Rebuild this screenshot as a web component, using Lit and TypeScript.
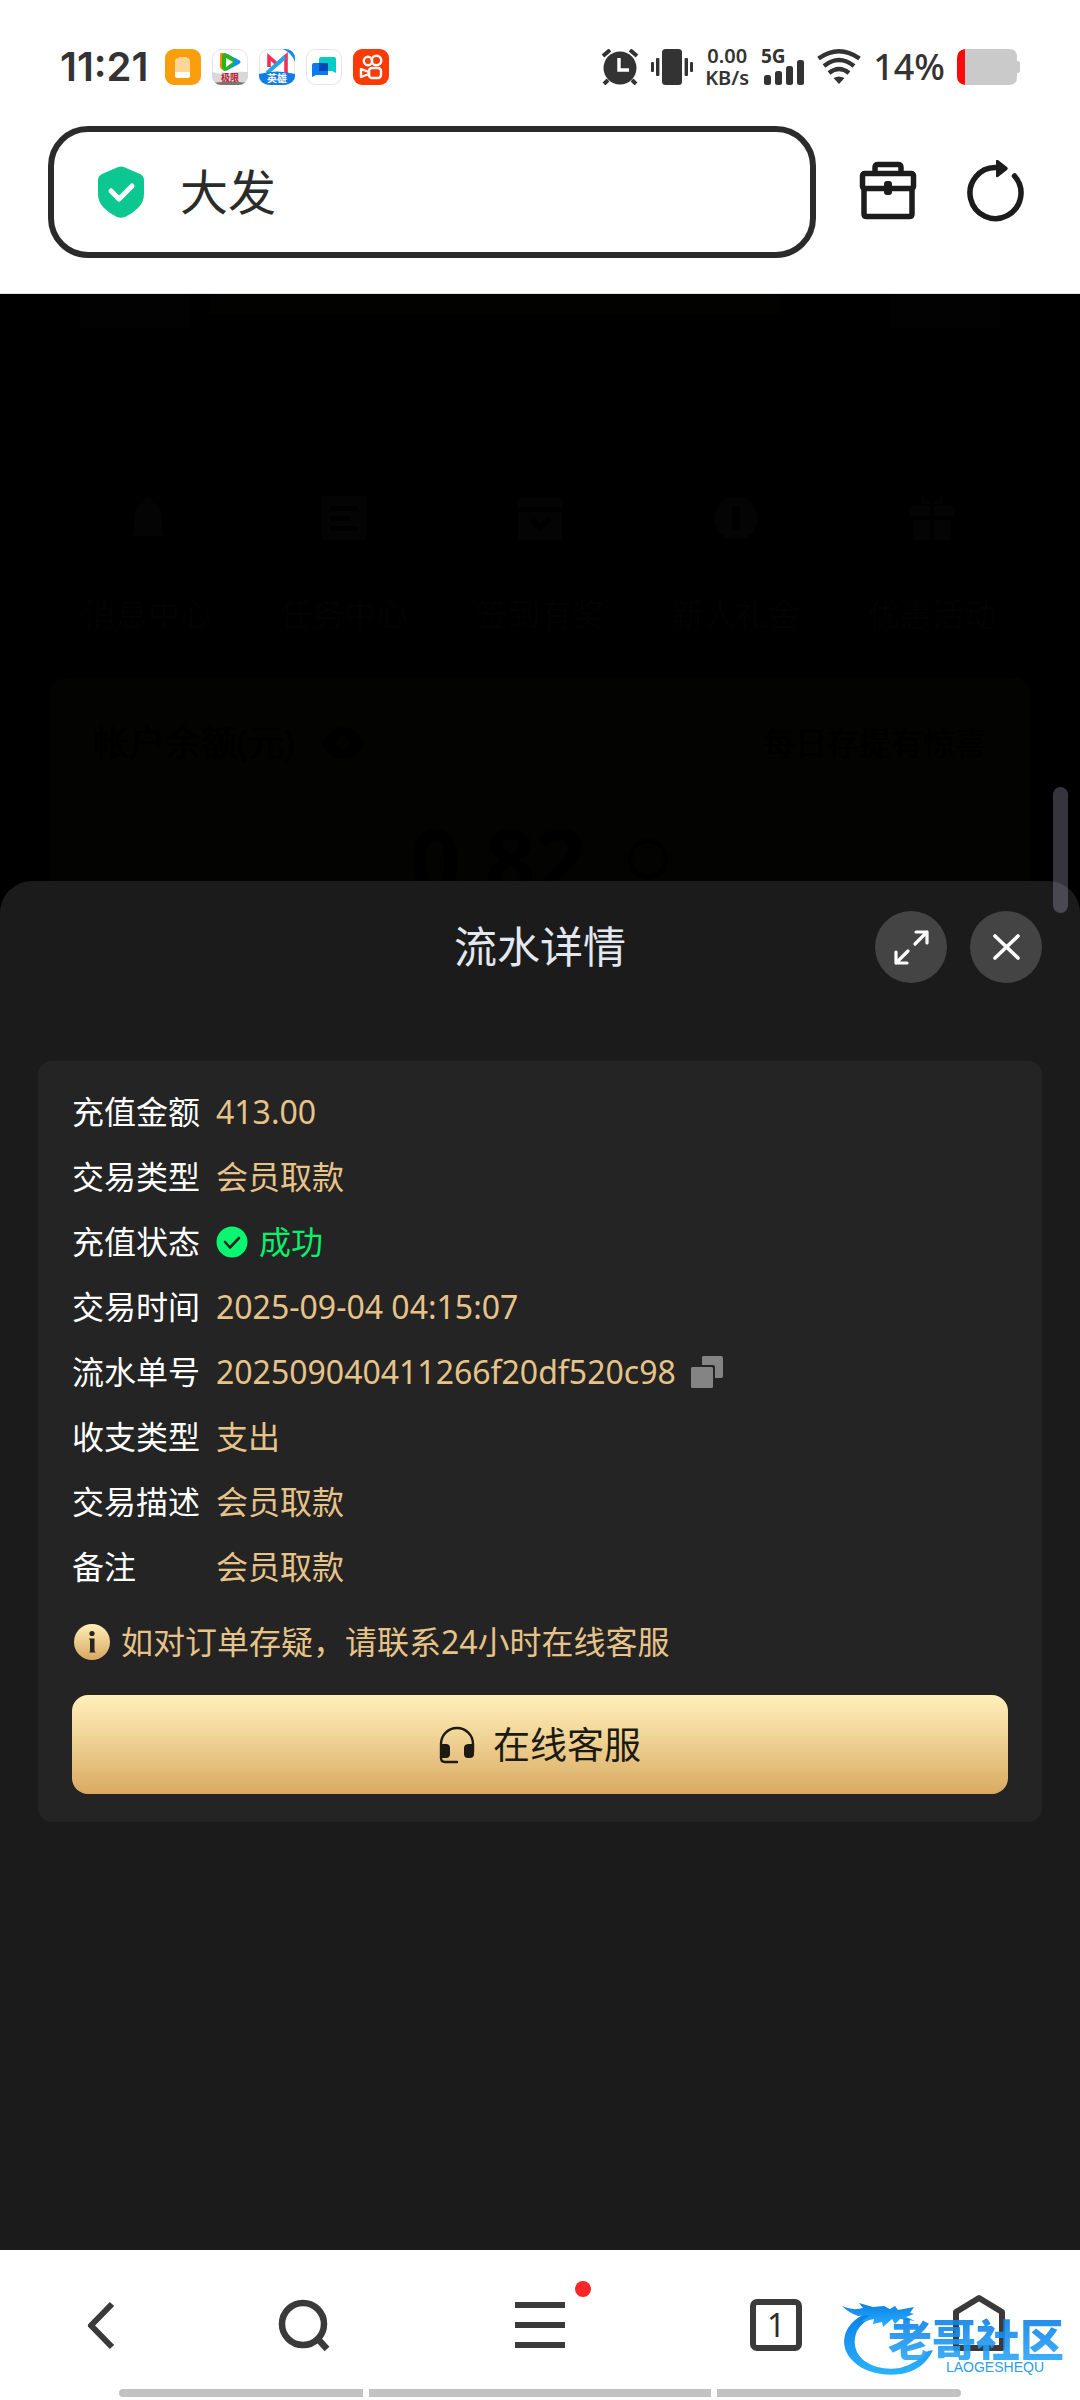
import { LitElement, html, css, svg } from "lit";
import { customElement } from "lit/decorators.js";

const FONT = css`"Noto Sans", "Noto Sans CJK SC", sans-serif`;

@customElement("status-bar")
class StatusBar extends LitElement {
  static styles = css`
    :host {
      display: flex;
      align-items: center;
      justify-content: space-between;
      padding: 40px 60px 32px 60px;
      height: 54px;
      color: #333;
      font-family: ${FONT};
    }
    .group {
      display: flex;
      align-items: center;
      gap: 12px;
    }
    .left {
      gap: 11px;
    }
    .time {
      font: 600 40px/54px Inter, sans-serif;
      margin-right: 6px;
    }
    .battery-text {
      font: 500 36px/54px ${FONT};
    }
    .rate {
      display: flex;
      flex-direction: column;
      font: 600 20px/22px ${FONT};
      text-align: center;
    }
    svg {
      display: block;
      flex: none;
    }
  `;

  render() {
    return html`
      <div class="group left">
        <span class="time">11:21</span>
        <svg width="36" height="36" viewBox="0 0 36 36">
          <rect width="36" height="36" rx="9" fill="#fb9e0b" />
          <path d="M14 9V8h8v1q3 0 3 3v12H10V12q0-3 4-3z" fill="#fdd596" />
          <path d="M10 23h15v4q0 2-2 2H12q-2 0-2-2z" fill="#fff" />
        </svg>
        <svg width="36" height="36" viewBox="0 0 36 36">
          <defs><clipPath id="a"><rect width="36" height="36" rx="9" /></clipPath></defs>
          <rect x=".5" y=".5" width="35" height="35" rx="9" fill="#fff" stroke="#e6e6e6" />
          <g clip-path="url(#a)">
            <path d="M0 23q9 3 18 1t18-1v13H0z" fill="#d8d8d8" />
            <path d="M0 34q18-3 36 0v2H0z" fill="#777" />
            <path d="M8 6q0-3 3-2l6 3-2 13q-7 2-7-3z" fill="#ff8a00" />
            <path d="M13 4l14 7q3 2 0 4L14 22z" fill="#1390f5" />
            <path d="M12 4q8 2 11 8-3 7-10 10-3 0-3-4V6z" fill="#27b51d" />
            <path d="M14 9l7 4-7 5z" fill="#fff" />
          </g>
          <text x="9" y="32" font-family="Noto Sans CJK SC, sans-serif" font-size="9" font-weight="700" fill="#c0152f">极限</text>
        </svg>
        <svg width="36" height="36" viewBox="0 0 36 36">
          <defs><clipPath id="b"><rect width="36" height="36" rx="9" /></clipPath></defs>
          <rect x=".5" y=".5" width="35" height="35" rx="9" fill="#fff" stroke="#e6e6e6" />
          <g clip-path="url(#b)">
            <path d="M24 0h12v13Q33 4 24 0z" fill="#1688f0" />
            <path d="M10 18V8l8 7 9-8v17" fill="none" stroke="#f52e57" stroke-width="3.6" />
            <path d="M8 24L26 8" stroke="#19a9ee" stroke-width="4" />
            <path d="M0 25q18-5 36 0v5q-5 6-12 6H12Q4 36 0 30z" fill="#137be4" />
          </g>
          <text x="8" y="33" font-family="Noto Sans CJK SC, sans-serif" font-size="10" font-weight="700" fill="#fff">英雄</text>
        </svg>
        <svg width="36" height="36" viewBox="0 0 36 36">
          <rect x=".5" y=".5" width="35" height="35" rx="9" fill="#fff" stroke="#e6e6e6" />
          <path d="M15 8h13q2 0 2 2v14l-4-2H13V10q0-2 2-2z" fill="#05cdc6" />
          <path d="M8 14h14v12H10l-4 2V16q0-2 2-2z" fill="#087cf0" />
          <path d="M13 14h9v8h-9z" fill="#0546b5" />
        </svg>
        <svg width="36" height="36" viewBox="0 0 36 36">
          <rect width="36" height="36" rx="9" fill="#fb3a05" />
          <g fill="none" stroke="#fff" stroke-width="2.4">
            <circle cx="15" cy="12" r="4.2" />
            <circle cx="23.5" cy="11.5" r="4.8" />
            <rect x="16" y="19" width="12" height="10" rx="3" />
            <path d="M16 23l-8-3v8l8-3z" stroke-linejoin="round" />
          </g>
        </svg>
      </div>
      <div class="group">
        <svg width="38" height="36" viewBox="0 0 38 36" fill="#333">
          <circle cx="19" cy="19" r="16.5" />
          <path d="M2 7l7-6M36 7l-7-6" stroke="#333" stroke-width="4" />
          <path d="M7 31l-4 4M31 31l4 4" stroke="#333" stroke-width="4" />
          <path d="M18 9v12h10" fill="none" stroke="#fff" stroke-width="3.4" />
        </svg>
        <svg width="42" height="36" viewBox="0 0 42 36" fill="#333">
          <rect x="11" width="20" height="36" rx="3.5" />
          <rect x="5" y="9" width="3.4" height="18" rx="1" />
          <rect x="33.6" y="9" width="3.4" height="18" rx="1" />
          <rect y="13" width="3" height="10" rx="1" />
          <rect x="39" y="13" width="3" height="10" rx="1" />
        </svg>
        <div class="rate"><span>0.00</span><span>KB/s</span></div>
        <svg width="44" height="38" viewBox="0 0 44 38" fill="#333">
          <text x="0" y="15" font-family="Noto Sans, sans-serif" font-size="19" font-weight="700">5G</text>
          <rect x="3" y="27" width="7" height="10" rx="2.5" />
          <rect x="14" y="23" width="7" height="14" rx="2.5" />
          <rect x="25" y="18" width="7" height="19" rx="2.5" />
          <rect x="36" y="12" width="7" height="25" rx="2.5" />
        </svg>
        <svg width="44" height="36" viewBox="0 0 44 36" fill="none" stroke="#333" stroke-width="4.4">
          <path d="M1.500 9.500Q22-5 42.500 9.500M7 17Q22 5 37 17M12 24Q22 16 32 24" />
          <path d="M16.500 29Q22 26 27.500 29L22 35z" fill="#333" stroke="none" />
        </svg>
        <span class="battery-text">14%</span>
        <svg width="63" height="36" viewBox="0 0 63 36">
          <path d="M8 0h44q8 0 8 8v4h1q2 0 2 2v8q0 2-2 2h-1v4q0 8-8 8H8z" fill="#cacaca" />
          <path d="M8 0v36q-8-1-8-9V9q0-8 8-9z" fill="#fb0a0c" />
        </svg>
      </div>
    `;
  }
}

@customElement("browser-toolbar")
class BrowserToolbar extends LitElement {
  static styles = css`
    :host {
      display: flex;
      align-items: center;
      padding: 0 54px 35px 48px;
      border-bottom: 1px solid #e4e4e4;
      font-family: ${FONT};
    }
    .address {
      flex: 1;
      min-width: 0;
      box-sizing: border-box;
      height: 132px;
      border: 6px solid #2b2b2b;
      border-radius: 40px;
      display: flex;
      align-items: center;
      gap: 36px;
      padding: 0 44px;
      margin-right: 42px;
    }
    .address svg {
      flex: none;
    }
    .url {
      flex: 1;
      min-width: 0;
      border: 0;
      outline: 0;
      padding: 0;
      background: none;
      color: #2b2b2b;
      font: 400 48px/72px ${FONT};
    }
    .tool {
      border: 0;
      background: none;
      padding: 0;
      width: 60px;
      height: 64px;
    }
    .tool + .tool {
      margin-left: 48px;
    }
    svg {
      display: block;
    }
  `;

  render() {
    return html`
      <label class="address">
        <svg width="46" height="52" viewBox="0 0 46 52">
          <path d="M19 1.500Q23-.5 27 1.500L42 8q4 2 4 6v14q0 8-6 14-6 6-13 9-4 1.500-8 0-7-3-13-9-6-6-6-14V14q0-4 4-6z" fill="#0cc890" />
          <path d="M13 25l8 8 13-13" fill="none" stroke="#fff" stroke-width="5" stroke-linecap="round" stroke-linejoin="round" />
        </svg>
        <input class="url" type="text" value="大发" aria-label="地址" />
      </label>
      <button class="tool" aria-label="工具箱">
        <svg width="60" height="64" viewBox="0 0 60 64" fill="none" stroke="#1c1c1c" stroke-width="5.500" stroke-linejoin="round">
          <path d="M17 13V7.500q0-3 3-3h20q3 0 3 3V13" />
          <rect x="4.500" y="13.500" width="51" height="15" rx="2" />
          <path d="M6 29v25q0 2.500 2.500 2.500h43q2.500 0 2.500-2.500V29" />
          <rect x="26" y="21" width="8" height="14" rx="3" fill="#1c1c1c" stroke="none" />
        </svg>
      </button>
      <button class="tool" aria-label="刷新">
        <svg width="60" height="64" viewBox="0 0 60 64">
          <path d="M30 7.500A25.500 25.500 0 1 0 48.500 16" fill="none" stroke="#1c1c1c" stroke-width="5.500" stroke-linecap="round" />
          <path d="M30 1.500q0-3 2-1.500l9 7q1.500 1.500 0 3l-9 7q-2 1-2-1z" fill="#1c1c1c" />
        </svg>
      </button>
    `;
  }
}

@customElement("account-backdrop")
class AccountBackdrop extends LitElement {
  static styles = css`
    :host {
      display: block;
      height: 587px;
      overflow: hidden;
      background: #000;
      color: #030303;
      font: 400 32px/48px ${FONT};
    }
    .banner {
      display: flex;
      justify-content: space-between;
      align-items: flex-start;
      padding: 0 80px;
      gap: 20px;
    }
    .tile {
      width: 110px;
      height: 34px;
      background: #020202;
    }
    .strip {
      flex: 1;
      height: 20px;
      background: #020201;
      margin-right: 90px;
    }
    .menu {
      display: grid;
      grid-template-columns: repeat(5, 1fr);
      padding: 168px 50px 40px;
      text-align: center;
    }
    .item svg {
      display: block;
      margin: 0 auto 50px;
    }
    .card {
      margin: 0 50px;
      padding: 41px 43px;
      border-radius: 16px;
      background: #030301;
      color: #000;
    }
    .head {
      display: flex;
      justify-content: space-between;
      align-items: center;
    }
    .who {
      display: flex;
      align-items: center;
      gap: 26px;
      font-size: 36px;
    }
    .amount {
      display: flex;
      justify-content: center;
      align-items: center;
      gap: 40px;
      margin-top: 36px;
      font: 700 88px/112px ${FONT};
    }
  `;

  render() {
    const items = [
      ["消息中心", svg`<path d="M22 2q4 0 4 4 10 4 10 16v14l4 4H4l4-4V22Q8 10 18 6q0-4 4-4z"/>`],
      ["任务中心", svg`<path d="M0 0h44v44H0zM8 10v5h28v-5zM8 20v5h20v-5zM8 30v5h28v-5z" fill-rule="evenodd"/>`],
      ["签到有奖", svg`<path d="M0 2h44v9H0zM0 16h44v28H0zM12 26l10 10 12-12-4-4-8 8-6-6z" fill-rule="evenodd"/>`],
      ["新人礼金", svg`<path d="M22 0a22 22 0 1 1 0 44a22 22 0 1 1 0-44zM18 10v24h8V10z" fill-rule="evenodd"/>`],
      ["优惠活动", svg`<path d="M0 10h20v10H0zM24 10h20v10H24zM3 24h17v20H3zM24 24h17v20H24zM12 0l10 8 10-8v8H12z"/>`],
    ];
    return html`
      <div class="banner">
        <div class="tile"></div>
        <div class="strip"></div>
        <div class="tile"></div>
      </div>
      <div class="menu">
        ${items.map(
          ([name, shape]) => html`<div class="item">
            <svg width="44" height="44" viewBox="0 0 44 44" fill="#040404">${shape}</svg>
            ${name}
          </div>`
        )}
      </div>
      <div class="card">
        <div class="head">
          <div class="who">
            <span>帐户余额(元)</span>
            <svg width="44" height="32" viewBox="0 0 44 32"><path d="M0 16Q22-16 44 16 22 48 0 16z" /><circle cx="22" cy="16" r="7" fill="#030301" /></svg>
          </div>
          <span>每日存提有惊喜</span>
        </div>
        <div class="amount">
          0.82
          <svg width="44" height="44" viewBox="0 0 44 44" fill="none" stroke="#000" stroke-width="4"><circle cx="22" cy="22" r="18" /></svg>
        </div>
      </div>
    `;
  }
}

@customElement("detail-sheet")
class DetailSheet extends LitElement {
  static styles = css`
    :host {
      display: block;
      flex: 1;
      box-sizing: border-box;
      padding: 30px 38px 40px;
      border-radius: 32px 32px 0 0;
      background: #1b1b1b;
      color: #fff;
      font: 400 32px/64px ${FONT};
    }
    .top {
      display: grid;
      grid-template-columns: 1fr auto 1fr;
      align-items: center;
      margin-bottom: 78px;
    }
    .title {
      grid-column: 2;
      margin: 0;
      color: #e3e7ef;
      font: 400 43px/64px ${FONT};
    }
    .actions {
      display: flex;
      justify-content: flex-end;
      gap: 23px;
    }
    .round {
      width: 72px;
      height: 72px;
      border: 0;
      padding: 0;
      border-radius: 50%;
      background: #444;
    }
    svg {
      display: block;
      flex: none;
    }
    .card {
      padding: 18px 34px 28px;
      border-radius: 14px;
      background: #242424;
    }
    .rows {
      margin: 0;
    }
    .row {
      display: grid;
      grid-template-columns: 144px 1fr;
      line-height: 65px;
    }
    .value {
      margin: 0;
      display: flex;
      align-items: center;
      color: #e6c388;
    }
    .ok {
      gap: 11px;
      color: #0bef6c;
    }
    .copy {
      border: 0;
      padding: 0;
      margin-left: 15px;
      background: none;
    }
    .hint {
      display: flex;
      align-items: center;
      gap: 11px;
      margin: 11px 0 21px;
      padding-left: 2px;
      color: #e6c388;
    }
    .service {
      display: flex;
      align-items: center;
      justify-content: center;
      gap: 18px;
      width: 100%;
      height: 99px;
      border: 0;
      border-radius: 16px;
      background: linear-gradient(#fff0bb, #efd294 45%, #d9aa61);
      color: #1d1a12;
      font: 400 37px/56px ${FONT};
    }
  `;

  private check = html`<svg width="32" height="32" viewBox="0 0 32 32">
    <circle cx="16" cy="16" r="15.500" fill="#0bf571" />
    <path d="M9 16l5 5.500 9-9.500" fill="none" stroke="#242424" stroke-width="2.600" stroke-linecap="round" stroke-linejoin="round" />
  </svg>`;

  private rows: [string, string][] = [
    ["充值金额", "413.00"],
    ["交易类型", "会员取款"],
    ["充值状态", "成功"],
    ["交易时间", "2025-09-04 04:15:07"],
    ["流水单号", "202509040411266f20df520c98"],
    ["收支类型", "支出"],
    ["交易描述", "会员取款"],
    ["备注", "会员取款"],
  ];

  private renderValue(label: string, value: string) {
    if (label === "充值状态") {
      return html`<dd class="value ok">${this.check}${value}</dd>`;
    }
    if (label === "流水单号") {
      return html`<dd class="value">
        ${value}
        <button class="copy" aria-label="复制">
          <svg width="32" height="32" viewBox="0 0 32 32" fill="#848484">
            <path d="M12 0h18q2 0 2 2v18q0 2-2 2h-6V11q0-2-2-2H11V1z" />
            <rect y="11" width="22" height="21" rx="1.500" />
          </svg>
        </button>
      </dd>`;
    }
    return html`<dd class="value">${value}</dd>`;
  }

  render() {
    return html`
      <header class="top">
        <h1 class="title">流水详情</h1>
        <div class="actions">
          <button class="round" aria-label="全屏">
            <svg width="72" height="72" viewBox="0 0 72 72" fill="none" stroke="#fff" stroke-width="3.200" stroke-linecap="round" stroke-linejoin="round">
              <path d="M41 21h11v11M52 21L40 33M32 52H21V41M21 52l12-12" />
            </svg>
          </button>
          <button class="round" aria-label="关闭">
            <svg width="72" height="72" viewBox="0 0 72 72" fill="none" stroke="#fff" stroke-width="3.600" stroke-linecap="round">
              <path d="M25 25l23 22M48 25L25 47" />
            </svg>
          </button>
        </div>
      </header>
      <section class="card">
        <dl class="rows">
          ${this.rows.map(
            ([label, value]) => html`<div class="row"><dt>${label}</dt>${this.renderValue(label, value)}</div>`
          )}
        </dl>
        <div class="hint">
          <svg width="36" height="36" viewBox="0 0 36 36">
            <defs>
              <linearGradient id="g" x2="0" y2="1">
                <stop stop-color="#ffefb8" />
                <stop offset="1" stop-color="#d7a75f" />
              </linearGradient>
            </defs>
            <circle cx="18" cy="18" r="18" fill="url(#g)" />
            <circle cx="18" cy="9.500" r="2.600" fill="#242424" />
            <path d="M15 14.500h5.500V26q0 2 1.500 2.500h-7q1-.5 1-2.500V16.500z" fill="#242424" />
          </svg>
          <span>如对订单存疑，请联系24小时在线客服</span>
        </div>
        <button class="service">
          <svg width="36" height="38" viewBox="0 0 36 38" fill="none" stroke="#1d1a12" stroke-width="2.400">
            <path d="M2 28V18a16 16 0 0 1 32 0v8M2 26v6q0 4 4 4h12" stroke-linecap="round" />
            <path d="M1 18h6q4 0 4 4v6q0 4-4 4H1zM35 18h-5q-5 0-5 4v6q0 4 4 4h2q4 0 4-4z" fill="#1d1a12" stroke="none" />
          </svg>
          在线客服
        </button>
      </section>
    `;
  }
}

@customElement("browser-nav")
class BrowserNav extends LitElement {
  static styles = css`
    :host {
      display: block;
      position: relative;
      background: #fff;
      padding-bottom: 3px;
    }
    .nav {
      display: grid;
      grid-template-columns: 3fr 3fr 4fr 3fr 3fr;
      justify-items: center;
      align-items: center;
      height: 128px;
      padding-top: 11px;
    }
    .key {
      position: relative;
      display: grid;
      place-items: center;
      border: 0;
      padding: 0;
      width: 60px;
      height: 60px;
      background: none;
    }
    .tabs {
      box-sizing: border-box;
      width: 52px;
      height: 52px;
      border: 6px solid #3a3a3a;
      border-radius: 7px;
      color: #2b2b2b;
      font: 400 32px/40px ${FONT};
    }
    .dot {
      position: absolute;
      top: -14px;
      right: -21px;
      width: 16px;
      height: 16px;
      border-radius: 50%;
      background: #fb2626;
    }
    svg {
      display: block;
      overflow: visible;
    }
    .handles {
      display: flex;
      gap: 6px;
      padding: 0 11%;
    }
    .handle {
      flex: 5;
      height: 8px;
      background: #c2c2c2;
    }
    .handle:first-child {
      border-radius: 4px 0 0 4px;
    }
    .handle:nth-child(2) {
      flex: 7;
    }
    .handle:last-child {
      border-radius: 0 4px 4px 0;
    }
    .mark {
      position: absolute;
      right: 16px;
      bottom: 22px;
      width: 222px;
      height: 78px;
      pointer-events: none;
    }
    .dragon {
      position: absolute;
      inset: 0;
    }
    .name,
    .latin {
      position: absolute;
      white-space: nowrap;
    }
    .name {
      right: 0;
      top: 16px;
      font: 900 44px/44px "Noto Sans CJK SC", sans-serif;
      color: transparent;
      background: linear-gradient(#0b7fe6, #2ba5f8);
      background-clip: text;
      -webkit-background-clip: text;
      opacity: 0.9;
    }
    .latin {
      right: 20px;
      top: 60px;
      font: 400 14px/14px "Liberation Sans", sans-serif;
      color: #2e9cf0;
    }
  `;

  render() {
    return html`
      <nav class="nav">
        <button class="key" aria-label="后退">
          <svg width="60" height="60" viewBox="0 0 60 60" fill="none" stroke="#3a3a3a" stroke-width="6" stroke-linejoin="round">
            <path d="M41 9L20 30.500 41 52" />
          </svg>
        </button>
        <button class="key" aria-label="搜索">
          <svg width="60" height="60" viewBox="0 0 60 60" fill="none" stroke="#3a3a3a" stroke-width="6.500">
            <circle cx="29" cy="29" r="21" />
            <path d="M43 43l10 11" />
          </svg>
        </button>
        <button class="key" aria-label="菜单">
          <svg width="60" height="60" viewBox="0 0 60 60" fill="#3a3a3a">
            <path d="M5 7h50v6H5zM5 27h50v6H5zM5 47h50v6H5z" />
          </svg>
          <span class="dot"></span>
        </button>
        <button class="key tabs" aria-label="标签页">1</button>
        <button class="key" aria-label="主页">
          <svg width="60" height="60" viewBox="0 0 60 60" fill="none" stroke="#3a3a3a" stroke-width="6" stroke-linejoin="round">
            <path d="M30 3l23 14v36H7V17z" />
          </svg>
        </button>
      </nav>
      <div class="handles">
        <span class="handle"></span>
        <span class="handle"></span>
        <span class="handle"></span>
      </div>
      <div class="mark">
        <svg class="dragon" width="222" height="78" viewBox="0 0 222 78">
          <defs>
            <linearGradient id="blue" x2="0" y2="1">
              <stop stop-color="#0b7fe6" />
              <stop offset="1" stop-color="#2bb2fb" />
            </linearGradient>
          </defs>
          <g fill="url(#blue)">
            <path d="M27 12Q3 22 2 41 2 57 20 68 38 77 59 74 82 70 91 50L86 51Q76 63 58 68 38 71 24 62 11 53 13 38 15 22 38 15z" />
            <path d="M0 6q10 5 21 2l-4-5 14 4 11-1 6 3 5-3 3 4 16-3-4 6 4 1-8 3 9 4-15-2-5 5-3-5-9 8-1-5-9 2 1-5-13 3 9-7-12 1Q7 13 0 6z" />
          </g>
        </svg>
        <span class="name">老哥社区</span>
        <span class="latin">LAOGESHEQU</span>
      </div>
    `;
  }
}

@customElement("app-root")
class AppRoot extends LitElement {
  static styles = css`
    :host {
      display: flex;
      flex-direction: column;
      min-height: 100vh;
      background: #fff;
    }
    .page {
      position: relative;
      flex: 1;
      display: flex;
      flex-direction: column;
      background: #000;
    }
    .thumb {
      position: absolute;
      top: 493px;
      right: 12px;
      width: 15px;
      height: 126px;
      border-radius: 8px;
      background: rgba(216, 212, 244, 0.25);
    }
  `;

  render() {
    return html`
      <status-bar></status-bar>
      <browser-toolbar></browser-toolbar>
      <main class="page">
        <account-backdrop></account-backdrop>
        <detail-sheet></detail-sheet>
        <div class="thumb"></div>
      </main>
      <browser-nav></browser-nav>
    `;
  }
}
